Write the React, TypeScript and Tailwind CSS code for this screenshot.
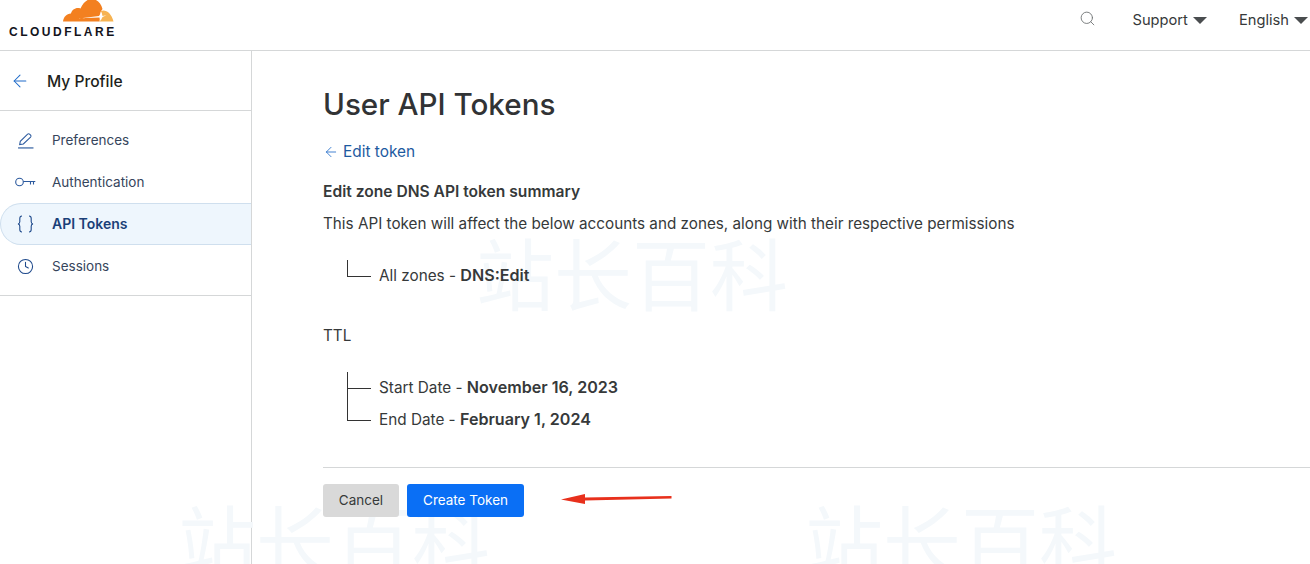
import { ArrowLeft, Clock, Search } from 'lucide-react'

const NAV_ITEMS = [
  { label: 'Preferences', icon: 'pen' },
  { label: 'Authentication', icon: 'key' },
  { label: 'API Tokens', icon: 'braces', active: true },
  { label: 'Sessions', icon: 'clock' },
]

function Logo() {
  return (
    <div className="flex h-[50px] w-[107px] flex-col items-end">
      <svg viewBox="64 0 52 23" className="h-[23px] w-[52px] shrink-0">
        <path
          d="M64 21.500c.5-4.500 3.500-7.500 8-8 1-4 5-6.500 9.500-5C84 3 88-1 92.500-1c5.500 0 9.500 4 11 10l-2 3-1 9.500z"
          fill="#f38020"
        />
        <path d="M100.500 21.500l2-7-.5-3.500c4.500-2 10.500 2 12.500 10.500z" fill="#f6b352" />
        <path d="M80 18.500l20-2.500 2.500-4 1 4 4-.7-4 1.800-2 4-1-3.500-20.500.7z" fill="#fff" />
      </svg>
      <span className="mt-[3px] self-start pl-[1px] font-['Liberation_Sans',sans-serif] text-[12px] leading-[12px] font-bold tracking-[2.500px] whitespace-nowrap text-[#14141c]">
        CLOUDFLARE
      </span>
    </div>
  )
}

function NavIcon({ name }: { name: string }) {
  if (name === 'pen') {
    return (
      <svg viewBox="0 0 16 16" fill="none" stroke="#2c5a9e" strokeWidth="1" className="h-[17px] w-[17px]">
        <path d="M2.500 11.800l.6-3L10 2c.6-.5 1.300-.5 1.800 0l1 1c.5.6.5 1.300 0 1.800L6 11.300z" />
        <path d="M1 15h14.500" strokeWidth="1.100" />
      </svg>
    )
  }
  if (name === 'key') {
    return (
      <svg viewBox="0 0 21 10" fill="none" stroke="#2c5a9e" strokeWidth="1.100" className="ml-[-2px] h-[10px] w-[21px]">
        <circle cx="4.500" cy="5" r="3.800" />
        <path d="M8.300 4.500h12M15.500 4.500v3M18.500 4.500v3" />
      </svg>
    )
  }
  if (name === 'clock') {
    return <Clock size={17} strokeWidth={1.500} className="text-[#1f4a8c]" />
  }
  return (
    <svg viewBox="0 0 17 18" fill="none" stroke="#1f4a8c" strokeWidth="1.100" className="h-[18px] w-[17px]">
      <path d="M5 1C3 1 2.800 2 2.800 3.500v3.300C2.800 8 2.200 8.800 1 9c1.200.2 1.800 1 1.800 2.200v3.300C2.800 16 3 17 5 17" />
      <path d="M12 1c2 0 2.200 1 2.200 2.500v3.300c0 1.200.6 2 1.800 2.200-1.200.2-1.800 1-1.800 2.200v3.300c0 1.500-.2 2.500-2.200 2.500" />
    </svg>
  )
}

function Sidebar() {
  return (
    <aside className="flex w-[252px] shrink-0 flex-col border-r border-[#d5d7d8]">
      <div className="flex h-[60px] items-center gap-[17px] border-b border-[#d5d7d8] pl-[10px]">
        <ArrowLeft size={20} strokeWidth={1.250} className="text-[#1f6bc9]" />
        <span className="pt-[2px] text-[15.600px] font-medium text-[#1d1f20]">My Profile</span>
      </div>
      <nav className="flex flex-col border-b border-[#d5d7d8] pt-[8px] pb-[8px]">
        {NAV_ITEMS.map((item) =>
          item.active ? (
            <div
              key={item.label}
              className="flex h-[42px] items-center rounded-l-[21px] border-y border-l border-[#cfdfee] bg-[#eef6fd] pl-[16px]"
            >
              <span className="flex w-[35px] items-center"><NavIcon name={item.icon} /></span>
              <span className="mb-[2px] text-[14px] font-semibold text-[#1a3f78]">{item.label}</span>
            </div>
          ) : (
            <div key={item.label} className="flex h-[42px] items-center pl-[17px]">
              <span className="flex w-[35px] items-center"><NavIcon name={item.icon} /></span>
              <span className="text-[13.500px] text-[#36455c]">{item.label}</span>
            </div>
          ),
        )}
      </nav>
    </aside>
  )
}

function TreeLine({ tall }: { tall?: boolean }) {
  return (
    <span
      className={
        tall
          ? 'absolute top-[-19px] left-[-32px] h-[32px] w-[24px] border-b border-l border-[#333]'
          : 'absolute top-[-4px] left-[-32px] h-[17px] w-[24px] border-b border-l border-[#333]'
      }
    />
  )
}

function Watermark({ className }: { className: string }) {
  return (
    <span
      className={`pointer-events-none absolute font-['Noto_Sans_CJK_SC',sans-serif] text-[78px] leading-none whitespace-nowrap text-[#f4f8fb] select-none ${className}`}
    >
      站长百科
    </span>
  )
}

export default function App() {
  return (
    <div className="relative flex h-[564px] w-[1310px] flex-col overflow-hidden bg-white font-['Inter',sans-serif] text-[#36393a]">
      <header className="flex h-[51px] shrink-0 items-start justify-between border-b border-[#d5d7d8] pl-[8px]">
        <Logo />
        <div className="flex items-center pt-[9px] text-[14.700px] text-[#36393a]">
          <Search size={17} strokeWidth={1.250} className="mr-[36px] mb-[3px] text-[#6e7173]" />
          <span>Support</span>
          <span className="mr-[32px] ml-[5px] h-0 w-0 border-x-[7px] border-t-[7px] border-x-transparent border-t-[#4a4d4f]" />
          <span>English</span>
          <span className="mr-[2px] ml-[5px] h-0 w-0 border-x-[7px] border-t-[7px] border-x-transparent border-t-[#4a4d4f]" />
        </div>
      </header>

      <div className="flex flex-1">
        <Sidebar />
        <main className="relative flex-1 pt-[33px] pl-[71px]">
          <Watermark className="top-[181px] left-[224px]" />
          <Watermark className="top-[448px] left-[-74px]" />
          <Watermark className="top-[448px] left-[553px]" />

          <div className="relative">
            <h1 className="text-[29.600px] leading-[40px] font-medium text-[#313335]">User API Tokens</h1>
            <a className="mt-[16px] flex h-[24px] items-center text-[15.400px] text-[#1d5aa0]">
              <ArrowLeft size={16} strokeWidth={1.250} className="mr-[4px] text-[#1f6bc9]" />
              Edit token
            </a>
            <h2 className="mt-[16px] text-[15.600px] leading-[24px] font-semibold">Edit zone DNS API token summary</h2>
            <p className="mt-[8px] text-[15.250px] leading-[24px]">
              This API token will affect the below accounts and zones, along with their respective permissions
            </p>
            <div className="relative mt-[28px] ml-[56px] text-[15.300px] leading-[24px]">
              <TreeLine />
              All zones - <strong className="text-[16.100px] leading-none font-semibold">DNS:Edit</strong>
            </div>
            <p className="mt-[36px] text-[15.250px] leading-[24px]">TTL</p>
            <div className="relative mt-[28px] ml-[56px] text-[15.300px] leading-[24px]">
              <TreeLine />
              Start Date - <strong className="text-[16.100px] leading-none font-semibold">November 16, 2023</strong>
            </div>
            <div className="relative mt-[8px] ml-[56px] text-[15.300px] leading-[24px]">
              <TreeLine tall />
              End Date - <strong className="text-[16.100px] leading-none font-semibold">February 1, 2024</strong>
            </div>
            <div className="mt-[35px] flex gap-[8px] border-t border-[#d5d7d8] pt-[16px]">
              <button className="h-[33px] w-[76px] rounded-[3px] bg-[#d9d9d9] text-[13.500px] text-[#36393a]">Cancel</button>
              <button className="h-[33px] w-[117px] rounded-[3px] bg-[#0a6ff5] text-[13.500px] text-white">Create Token</button>
              <svg viewBox="0 0 112 14" className="mt-[9px] ml-[28px] h-[14px] w-[112px]">
                <path d="M1 6.500L25 1v3.500L111.500 3v2.500L25 7.500V11z" fill="#e8301c" />
              </svg>
            </div>
          </div>
        </main>
      </div>
    </div>
  )
}
